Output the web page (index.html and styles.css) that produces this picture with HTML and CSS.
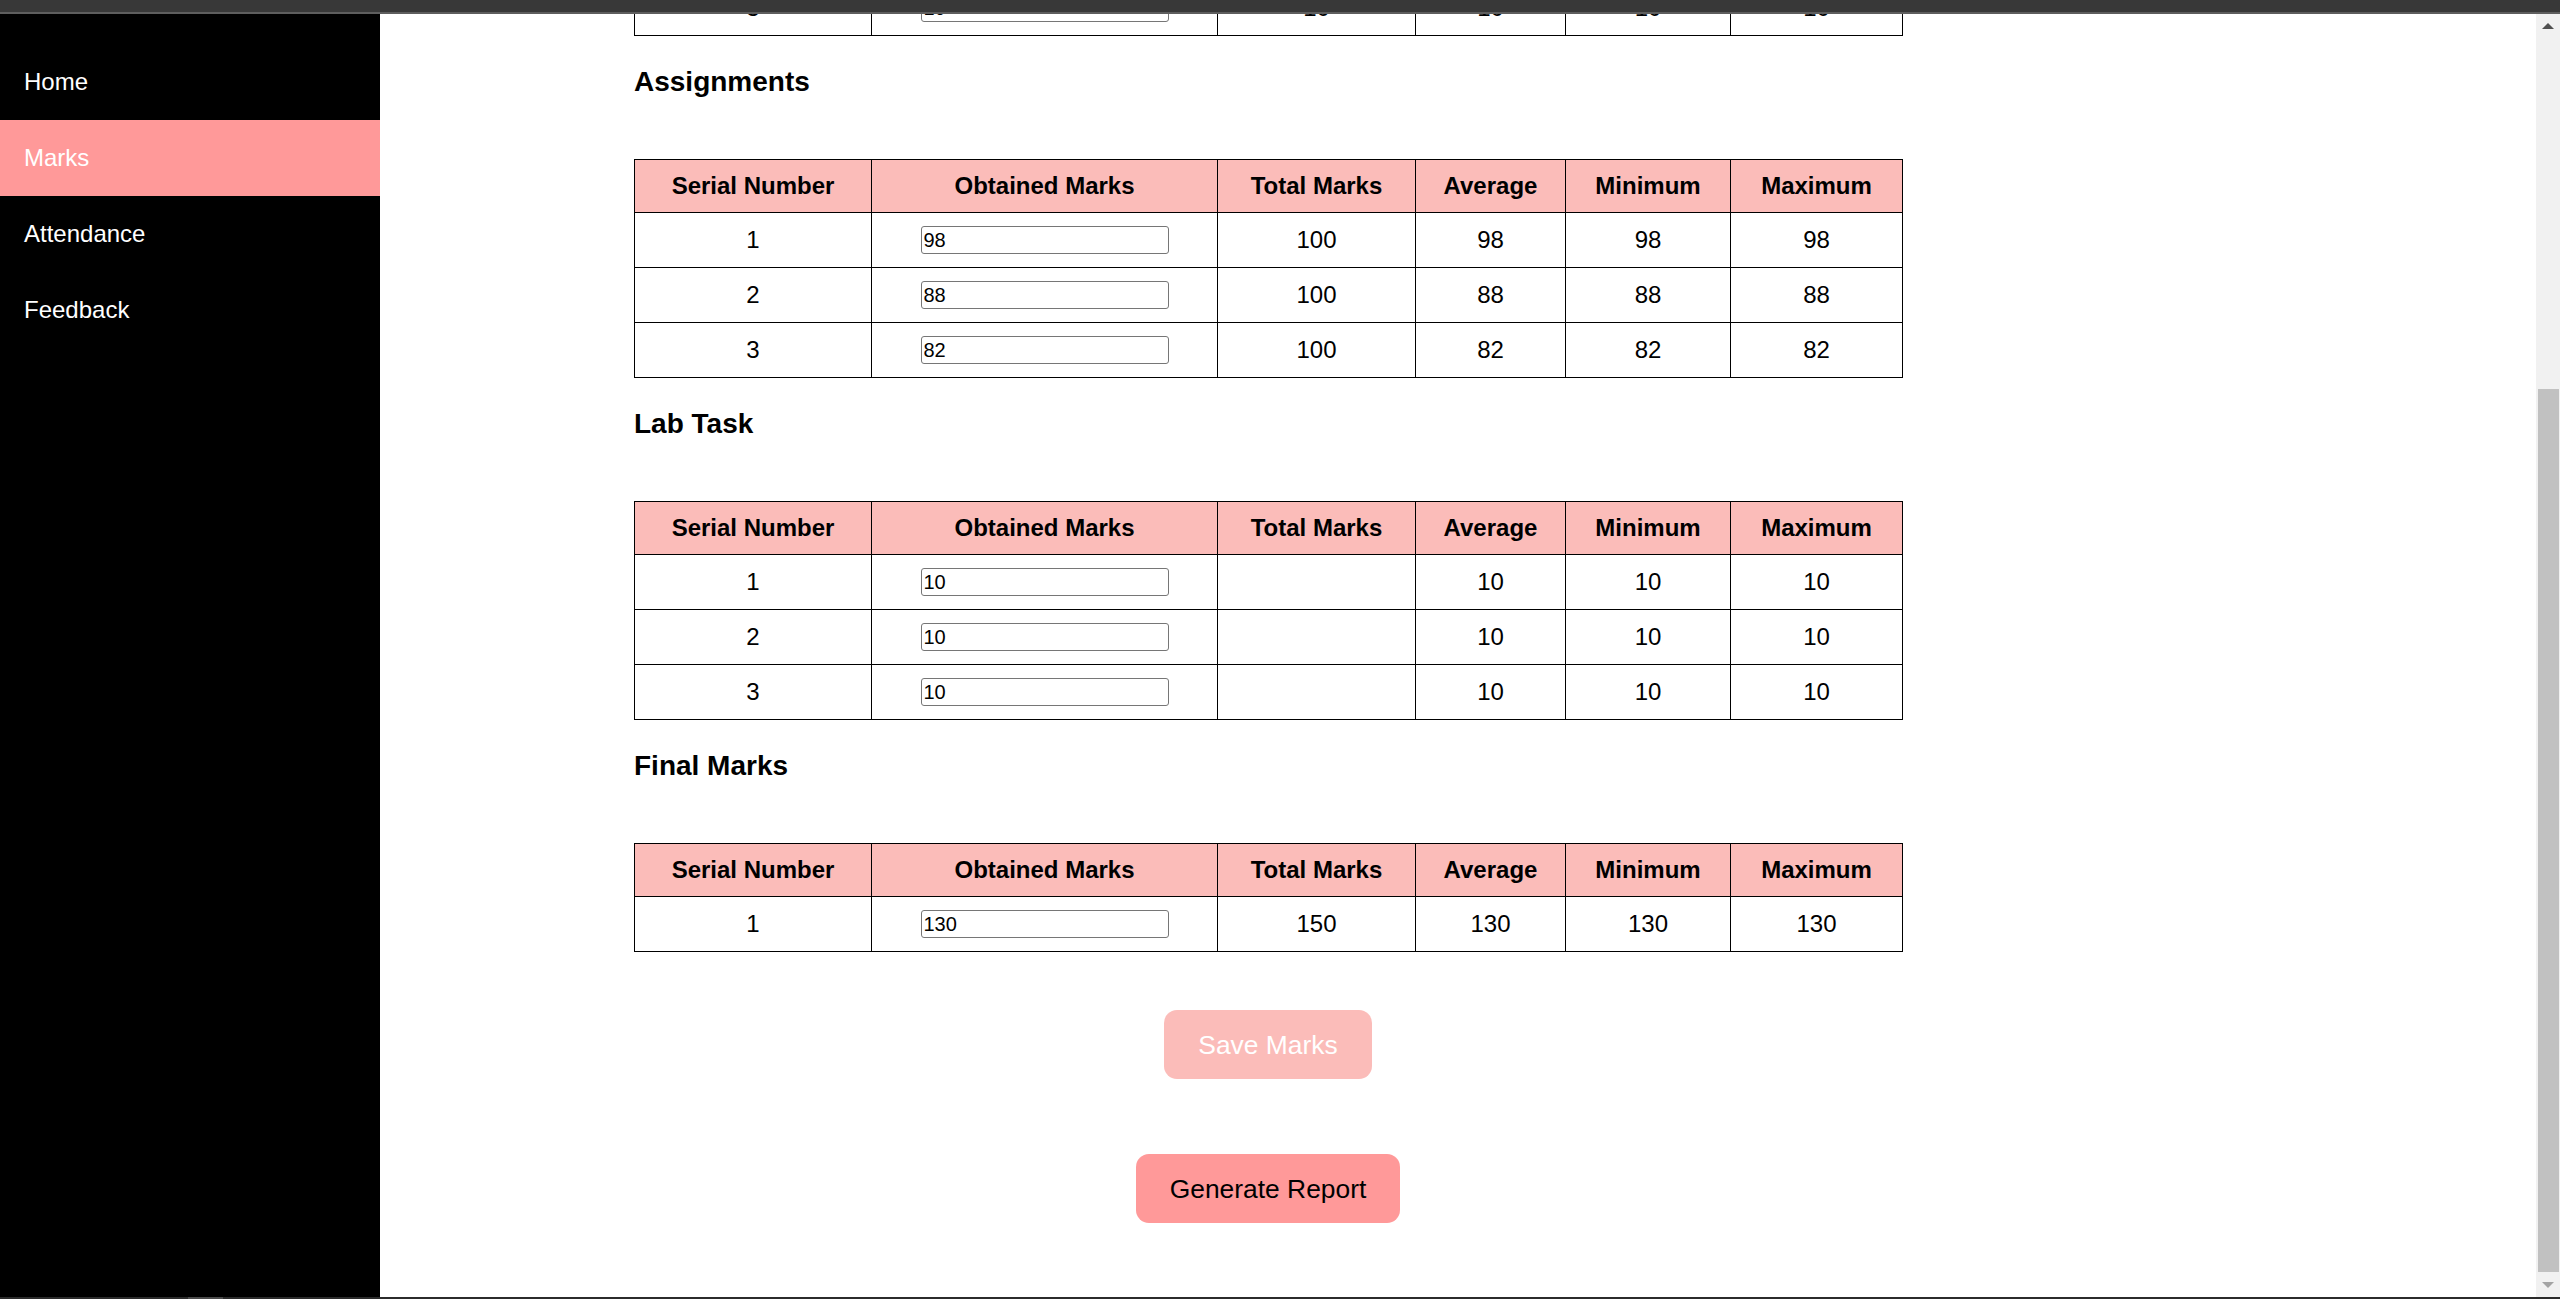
FILE: index.html
```html
<!DOCTYPE html>
<html lang="en">
<head>
<meta charset="utf-8">
<title>Marks</title>
<link rel="stylesheet" href="styles.css">
</head>
<body>
<div class="topbar"></div>
<div class="frame">
  <nav class="sidebar">
    <a class="nav-item" href="#">Home</a>
    <a class="nav-item active" href="#">Marks</a>
    <a class="nav-item" href="#">Attendance</a>
    <a class="nav-item" href="#">Feedback</a>
  </nav>
  <main class="content">
    <div class="page">
      <table class="marks scrolled">
        <tbody>
          <tr><td>3</td><td><input class="mark-input" type="text" value="10"></td><td>10</td><td>10</td><td>10</td><td>10</td></tr>
        </tbody>
      </table>

      <h3 class="section-title">Assignments</h3>
      <table class="marks">
        <thead>
          <tr><th>Serial Number</th><th>Obtained Marks</th><th>Total Marks</th><th>Average</th><th>Minimum</th><th>Maximum</th></tr>
        </thead>
        <tbody>
          <tr><td>1</td><td><input class="mark-input" type="text" value="98"></td><td>100</td><td>98</td><td>98</td><td>98</td></tr>
          <tr><td>2</td><td><input class="mark-input" type="text" value="88"></td><td>100</td><td>88</td><td>88</td><td>88</td></tr>
          <tr><td>3</td><td><input class="mark-input" type="text" value="82"></td><td>100</td><td>82</td><td>82</td><td>82</td></tr>
        </tbody>
      </table>

      <h3 class="section-title">Lab Task</h3>
      <table class="marks">
        <thead>
          <tr><th>Serial Number</th><th>Obtained Marks</th><th>Total Marks</th><th>Average</th><th>Minimum</th><th>Maximum</th></tr>
        </thead>
        <tbody>
          <tr><td>1</td><td><input class="mark-input" type="text" value="10"></td><td></td><td>10</td><td>10</td><td>10</td></tr>
          <tr><td>2</td><td><input class="mark-input" type="text" value="10"></td><td></td><td>10</td><td>10</td><td>10</td></tr>
          <tr><td>3</td><td><input class="mark-input" type="text" value="10"></td><td></td><td>10</td><td>10</td><td>10</td></tr>
        </tbody>
      </table>

      <h3 class="section-title">Final Marks</h3>
      <table class="marks">
        <thead>
          <tr><th>Serial Number</th><th>Obtained Marks</th><th>Total Marks</th><th>Average</th><th>Minimum</th><th>Maximum</th></tr>
        </thead>
        <tbody>
          <tr><td>1</td><td><input class="mark-input" type="text" value="130"></td><td>150</td><td>130</td><td>130</td><td>130</td></tr>
        </tbody>
      </table>

      <div class="actions">
        <button class="btn btn-save" type="button" disabled>Save Marks</button>
        <button class="btn btn-report" type="button">Generate Report</button>
      </div>
    </div>
  </main>
  <div class="scrollbar">
    <div class="arrow arrow-up"></div>
    <div class="track"><div class="thumb"></div></div>
    <div class="arrow arrow-down"></div>
  </div>
</div>
<div class="bottombar"><span class="bottom-mark"></span></div>
</body>
</html>
```
FILE: styles.css
```css
* { box-sizing: border-box; }

html, body {
  margin: 0;
  height: 1299px;
  overflow: hidden;
}

body {
  display: flex;
  flex-direction: column;
  font-family: "Liberation Sans", Arial, sans-serif;
  font-size: 24px;
  color: #000;
  background: #fff;
}

.topbar {
  height: 14px;
  background: #383838;
  border-bottom: 2px solid #5e5e5e;
  flex: none;
}

.frame {
  flex: 1;
  display: flex;
  min-height: 0;
}

.sidebar {
  width: 380px;
  flex: none;
  background: #000;
  padding-top: 30px;
  display: flex;
  flex-direction: column;
}

.nav-item {
  display: block;
  color: #fff;
  text-decoration: none;
  font-size: 24px;
  line-height: 28px;
  padding: 24px 24px;
}

.nav-item.active {
  background: #ff9999;
}

.content {
  flex: 1;
  overflow: hidden;
  min-width: 0;
}

.page {
  width: 1521px;
  padding-left: 254px;
}

.marks {
  border-collapse: collapse;
  table-layout: fixed;
  width: 1268px;
}

.marks.scrolled {
  margin-top: -34px;
}

.marks th,
.marks td {
  border: 1px solid #000;
  text-align: center;
  vertical-align: middle;
  line-height: 28px;
}

.marks th {
  background: #fbbcb9;
  font-weight: bold;
  padding: 12px 0;
}

.marks td {
  padding: 13px 0;
}

.marks th:nth-child(1), .marks td:nth-child(1) { width: 237px; }
.marks th:nth-child(2), .marks td:nth-child(2) { width: 346px; }
.marks th:nth-child(3), .marks td:nth-child(3) { width: 198px; }
.marks th:nth-child(4), .marks td:nth-child(4) { width: 150px; }
.marks th:nth-child(5), .marks td:nth-child(5) { width: 165px; }
.marks th:nth-child(6), .marks td:nth-child(6) { width: 172px; }

.mark-input {
  display: block;
  margin: 0 auto;
  width: 248px;
  height: 28px;
  padding: 0 2px;
  font-family: "Liberation Sans", Arial, sans-serif;
  font-size: 20px;
  color: #000;
  border: 1px solid #767676;
  border-radius: 3px;
  background: #fff;
}

.section-title {
  font-size: 28px;
  font-weight: bold;
  line-height: 32px;
  margin: 30px 0 61px;
}

.actions {
  width: 1268px;
  display: flex;
  flex-direction: column;
  align-items: center;
  padding-top: 58px;
}

.btn {
  font-family: "Liberation Sans", Arial, sans-serif;
  font-size: 26.4px;
  line-height: 30px;
  padding: 19.5px 34px;
  border: none;
  border-radius: 13px;
}

.btn-save {
  background: #fbbcb9;
  color: #fff;
}

.btn-report {
  background: #ff9999;
  color: #000;
  margin-top: 75px;
  padding: 19.5px 33.5px;
}

.scrollbar {
  width: 24px;
  flex: none;
  background: #f1f1f1;
  display: flex;
  flex-direction: column;
  align-items: stretch;
}

.arrow {
  height: 24px;
  flex: none;
  display: flex;
  justify-content: center;
  align-items: center;
}

.arrow-up::before {
  content: "";
  border-left: 6px solid transparent;
  border-right: 6px solid transparent;
  border-bottom: 6px solid #505050;
}

.arrow-down::before {
  content: "";
  border-left: 6px solid transparent;
  border-right: 6px solid transparent;
  border-top: 6px solid #a3a3a3;
}

.track {
  flex: 1;
  padding-top: 351px;
  padding-left: 2px;
  padding-right: 1px;
}

.thumb {
  height: 883px;
  background: #c1c1c1;
}

.bottombar {
  height: 2px;
  flex: none;
  background: #2b2b2b;
  position: relative;
}

.bottom-mark {
  position: absolute;
  left: 188px;
  top: 0;
  width: 35px;
  height: 2px;
  background: #4a4a4a;
}
```
